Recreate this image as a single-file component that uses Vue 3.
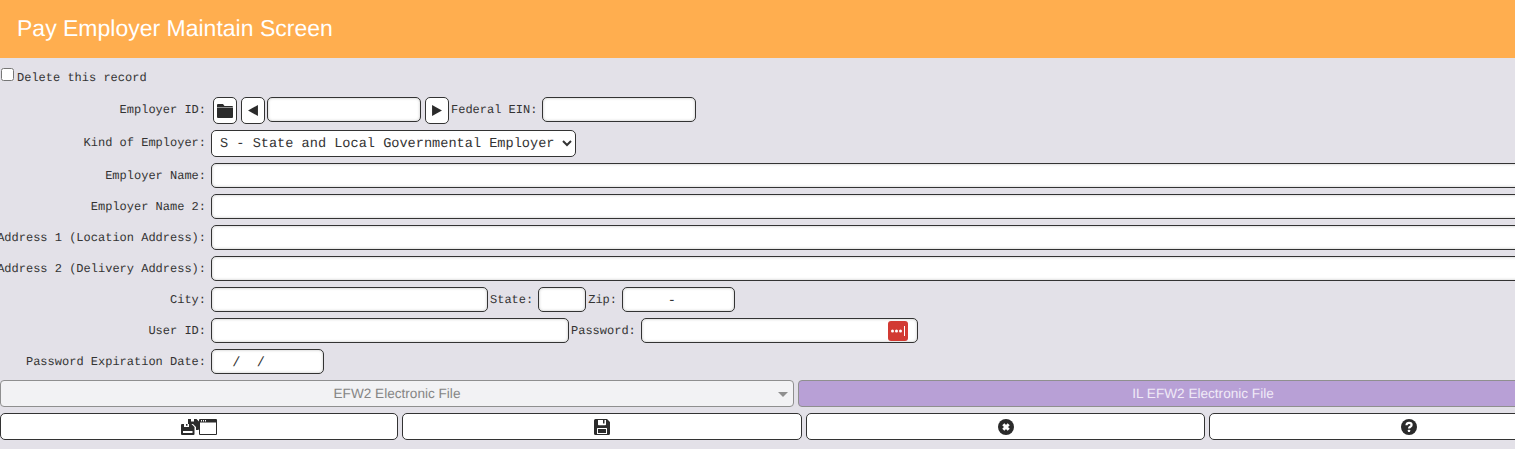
<script setup>
const wideRows = ['Employer Name:', 'Employer Name 2:', 'Address 1 (Location Address):', 'Address 2 (Delivery Address):'];
</script>

<template>
  <div class="screen">
    <div class="sheet">
      <header class="title-bar">Pay Employer Maintain Screen</header>

      <label class="delete-line">
        <input type="checkbox" />
        <span>Delete this record</span>
      </label>

      <div class="form">
        <div class="row">
          <span class="label">Employer ID:</span>
          <button class="nav-btn first" type="button">
            <svg viewBox="0 0 16 14" width="16" height="14">
              <path d="M1 0h5l1.500 2H15a1 1 0 0 1 1 1H0V1a1 1 0 0 1 1-1z" />
              <path d="M0 3.600h16V13a1 1 0 0 1-1 1H1a1 1 0 0 1-1-1z" />
            </svg>
          </button>
          <button class="nav-btn" type="button">
            <svg viewBox="0 0 9 10" width="10" height="11"><path d="M9 0v10L0 5z" /></svg>
          </button>
          <input class="field w154 tight" type="text" />
          <button class="nav-btn after" type="button">
            <svg viewBox="0 0 9 10" width="10" height="11"><path d="M0 0v10l9-5z" /></svg>
          </button>
          <span class="inline-label">Federal EIN:</span>
          <input class="field w154" type="text" />
        </div>

        <div class="row">
          <span class="label">Kind of Employer:</span>
          <select class="kind">
            <option>S - State and Local Governmental Employer</option>
          </select>
        </div>

        <div v-for="name in wideRows" :key="name" class="row">
          <span class="label">{{ name }}</span>
          <input class="field grow" type="text" />
        </div>

        <div class="row">
          <span class="label">City:</span>
          <input class="field w277" type="text" />
          <span class="inline-label">State:</span>
          <input class="field w48" type="text" />
          <span class="inline-label">Zip:</span>
          <input class="field w113" type="text" value="     -" />
        </div>

        <div class="row">
          <span class="label">User ID:</span>
          <input class="field w358" type="text" />
          <span class="inline-label">Password:</span>
          <div class="pass-wrap">
            <input class="field w277" type="password" />
            <span class="pass-badge">
              <svg viewBox="0 0 20 20" width="20" height="20">
                <circle cx="4.500" cy="10" r="1.500" />
                <circle cx="8.500" cy="10" r="1.500" />
                <circle cx="12.500" cy="10" r="1.500" />
                <rect x="16" y="5" width="1" height="10" />
              </svg>
            </span>
          </div>
        </div>

        <div class="row">
          <span class="label">Password Expiration Date:</span>
          <input class="field w113" type="text" value="  /  /" />
        </div>

        <div class="file-row">
          <div class="combo">
            <span>EFW2 Electronic File</span>
            <i class="combo-arrow"></i>
          </div>
          <div class="il-file">IL EFW2 Electronic File</div>
        </div>

        <div class="action-row">
          <button class="action" type="button">
            <svg viewBox="0 0 36 16" width="36" height="16">
              <!-- back disk -->
              <path fill-rule="evenodd" d="M7 0h8.500L18 2.500V10a1 1 0 0 1-1 1h-2V8L12 5H7zM10 0v2.500h3V0z" />
              <!-- front disk -->
              <path fill-rule="evenodd" d="M1 5h9.500L13.500 8v7a1 1 0 0 1-1 1H1a1 1 0 0 1-1-1V6a1 1 0 0 1 1-1zM3 5v3h5V5h-1.500v1.800H5V5zM2 12v2h9.500v-2z" />
              <!-- window -->
              <path fill-rule="evenodd" d="M19 0h16a1 1 0 0 1 1 1v14a1 1 0 0 1-1 1H19a1 1 0 0 1-1-1V1a1 1 0 0 1 1-1zm0 3.500V15h16V3.500zM20 1v1.500h1V1zm2 0v1.500h1V1zm2 0v1.500h1V1z" />
            </svg>
          </button>
          <button class="action" type="button">
            <svg viewBox="0 0 16 16" width="16" height="16">
              <path fill-rule="evenodd" d="M1.500 0H13l3 3v11.500a1.500 1.500 0 0 1-1.500 1.500h-13A1.500 1.500 0 0 1 0 14.500v-13A1.500 1.500 0 0 1 1.500 0zM4 1v4.500a.7.7 0 0 0 .7.700h6.600a.7.7 0 0 0 .7-.7V1h-1.500v3.500H9V1zM3 9.500V15h10V9.500a.5.5 0 0 0-.5-.5h-9a.5.500 0 0 0-.5.500zM4 10h8v4H4z" />
            </svg>
          </button>
          <button class="action" type="button">
            <svg viewBox="0 0 16 16" width="16" height="16">
              <circle cx="8" cy="8" r="8" />
              <path d="M5.300 5.300l5.400 5.400M10.700 5.300l-5.400 5.400" class="cut" />
            </svg>
          </button>
          <button class="action" type="button">
            <svg viewBox="0 0 16 16" width="16" height="16">
              <circle cx="8" cy="8" r="8" />
              <path d="M5.500 6.200c0-1.500 1.100-2.400 2.600-2.400s2.500.9 2.500 2.100c0 1.900-2.600 1.800-2.600 3.600" class="mark" />
              <rect x="6.900" y="10.800" width="2.200" height="2.200" rx=".4" fill="#fff" />
            </svg>
          </button>
        </div>
      </div>
    </div>
  </div>
</template>

<style scoped>
.screen {
  width: 1515px;
  height: 449px;
  overflow: hidden;
  background: #e3e1e8;
  text-rendering: geometricPrecision;
}

.sheet {
  width: 1608px;
}

.title-bar {
  height: 58px;
  line-height: 56px;
  padding-left: 17px;
  background: #ffae4f;
  color: #fff;
  font-family: "Liberation Sans", Arial, sans-serif;
  font-size: 23px;
}

.delete-line {
  display: flex;
  height: 39px;
  padding-top: 10px;
  box-sizing: border-box;
  font-family: "Liberation Mono", monospace;
  font-size: 12px;
  color: #333;
}

.delete-line input {
  width: 13px;
  height: 13px;
  margin: 0 3px 0 1px;
}

.delete-line span {
  line-height: 20px;
}

.form {
  display: flex;
  flex-direction: column;
  gap: 6px;
}

.row {
  display: flex;
  align-items: flex-start;
}

.label,
.inline-label {
  font-family: "Liberation Mono", monospace;
  font-size: 12px;
  line-height: 27px;
  height: 25px;
  color: #333;
  white-space: nowrap;
}

.label {
  flex: 0 0 206px;
  min-width: 0;
  display: flex;
  justify-content: flex-end;
  margin-right: 5px;
}

.inline-label {
  margin: 0 5px 0 2px;
}

.field {
  height: 25px;
  box-sizing: border-box;
  padding: 3px 4px 0;
  border: 1px solid #333;
  border-radius: 5px;
  background: #fff;
  box-shadow: inset 0 0 3px rgba(0, 0, 0, 0.25);
  font-family: "Liberation Mono", monospace;
  font-size: 13.6px;
  color: #333;
  outline: none;
  text-rendering: geometricPrecision;
}

.grow { flex: 1; min-width: 0; }
.w48 { width: 48px; }
.w113 { width: 113px; }
.w154 { width: 154px; }
.w277 { width: 277px; }
.w358 { width: 358px; }
.tight { margin-left: 2px; }

.nav-btn {
  width: 24px;
  height: 27px;
  padding: 0;
  display: flex;
  align-items: center;
  justify-content: center;
  border: 1px solid #333;
  border-radius: 5px;
  background: #fff;
  fill: #2b2b2b;
}

.nav-btn.first {
  margin: 0 4px 0 2px;
}

.nav-btn.after {
  margin-left: 4px;
}

.kind {
  width: 365px;
  height: 27px;
  box-sizing: border-box;
  padding: 2px 0 0 4px;
  border: 1px solid #333;
  border-radius: 5px;
  background-color: #fff;
  font-family: "Liberation Mono", monospace;
  font-size: 13.6px;
  color: #333;
  text-rendering: geometricPrecision;
}

.pass-wrap {
  position: relative;
  height: 25px;
}

.pass-badge {
  position: absolute;
  top: 3px;
  right: 10px;
  width: 20px;
  height: 20px;
  border-radius: 3px;
  background: #d23a33;
  fill: #fff;
}

.pass-badge svg {
  display: block;
}

.file-row {
  display: flex;
  gap: 4px;
}

.combo,
.il-file {
  height: 27px;
  box-sizing: border-box;
  padding-bottom: 1px;
  border: 1px solid #8f8f8f;
  border-radius: 4px;
  display: flex;
  align-items: center;
  justify-content: center;
  font-family: "Liberation Sans", Arial, sans-serif;
  font-size: 13.6px;
}

.combo {
  position: relative;
  flex: 0 0 794px;
  background: #f2f2f4;
  color: #858585;
}

.combo-arrow {
  position: absolute;
  right: 5px;
  top: 11px;
  border-left: 5px solid transparent;
  border-right: 5px solid transparent;
  border-top: 5px solid #8f8f8f;
}

.il-file {
  flex: 1;
  background: #b8a0d6;
  color: #f0eaf7;
}

.action-row {
  display: grid;
  grid-template-columns: 398px 400px 399px 1fr;
  gap: 4px;
}

.action {
  height: 27px;
  padding: 0;
  display: flex;
  align-items: center;
  justify-content: center;
  border: 1px solid #333;
  border-radius: 5px;
  background: #fff;
  fill: #2b2b2b;
}

.cut {
  fill: none;
  stroke: #fff;
  stroke-width: 3;
}

.mark {
  fill: none;
  stroke: #fff;
  stroke-width: 2.2;
}
</style>
